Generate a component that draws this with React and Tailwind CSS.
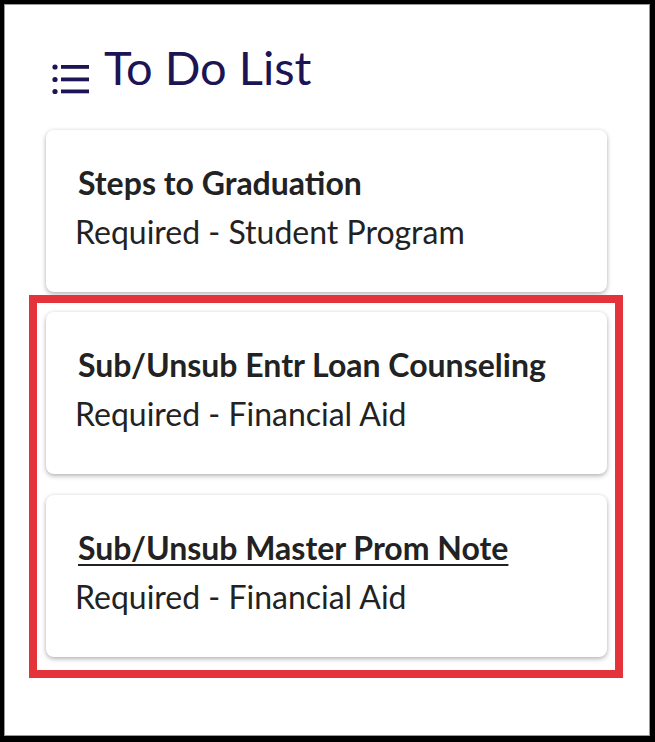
export default function App() {
  const font = { fontFamily: "Lato, 'Noto Sans', sans-serif" };
  const Card = ({ title, sub, underline }) => (
    <div className="w-full h-[162px] bg-white rounded-[8px] shadow-[0_2px_5px_rgba(0,0,0,0.28),0_0_4px_rgba(0,0,0,0.06)] pl-[29px] pt-[33px]">
      <div className={"pl-[3px] text-[32px] leading-[40px] font-bold text-[#222] " + (underline ? "underline decoration-2 underline-offset-[4px]" : "")}>{title}</div>
      <div className="mt-[9px] text-[32px] leading-[40px] text-[#222]">{sub}</div>
    </div>
  );
  return (
    <div style={font} className="w-[655px] h-[742px] bg-white border-black border-t-4 border-l-4 border-r-[5px] border-b-[6px] box-border">
      <div className="w-full h-full border border-[#999] box-border">
        <div className="flex items-start pl-[46px] pt-[37px]">
          <svg width="40" height="40" viewBox="0 0 40 40" className="mt-[17px] shrink-0">
            <circle cx="4" cy="8" r="2.6" fill="#1c1454" />
            <circle cx="4" cy="20.5" r="2.6" fill="#1c1454" />
            <circle cx="4" cy="32.5" r="2.6" fill="#1c1454" />
            <rect x="10" y="6" width="28" height="3.8" fill="#1c1454" />
            <rect x="10" y="18.5" width="28" height="3.8" fill="#1c1454" />
            <rect x="10" y="30.5" width="28" height="3.8" fill="#1c1454" />
          </svg>
          <h1 className="ml-[13px] text-[47px] leading-[50px] text-[#1c1454]">To Do List</h1>
        </div>
        <div className="pl-[41px] pr-[42px] pt-[31px]">
          <Card title="Steps to Graduation" sub="Required - Student Program" />
        </div>
        <div className="ml-[24px] mt-[3px] w-[594px] border-[8px] border-[#e5333b] pt-[9px] pl-[9px] pr-[8px] pb-[13px] flex flex-col gap-[21px]">
          <Card title="Sub/Unsub Entr Loan Counseling" sub="Required - Financial Aid" />
          <Card title="Sub/Unsub Master Prom Note" sub="Required - Financial Aid" underline />
        </div>
      </div>
    </div>
  );
}
